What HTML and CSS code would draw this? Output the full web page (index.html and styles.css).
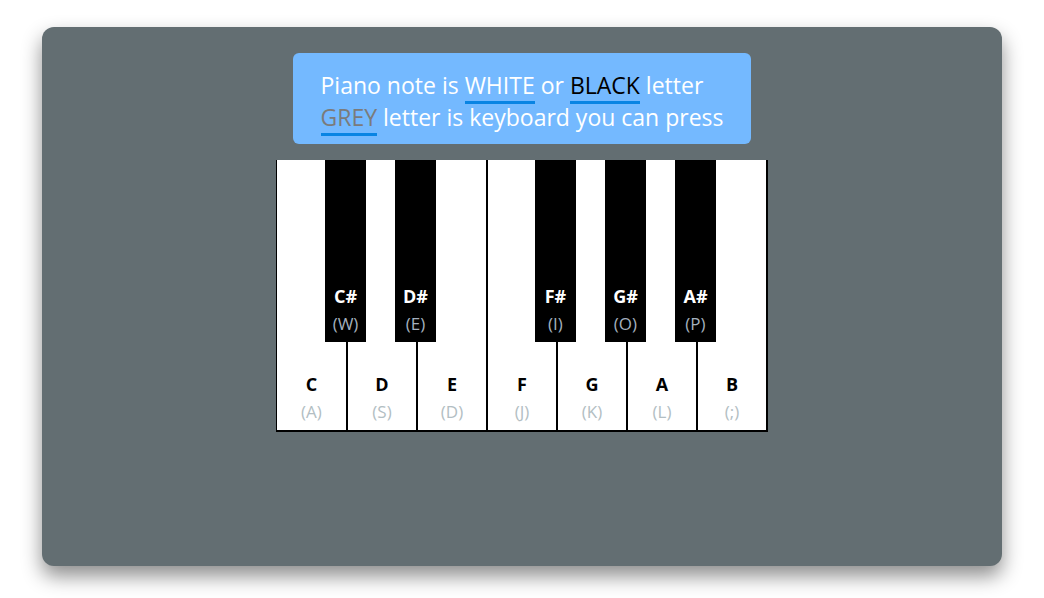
FILE: index.html
```html
<!DOCTYPE html>
<html>
<head>
<meta charset="utf-8">
<link rel="stylesheet" href="styles.css">
</head>
<body>
<div class="card">
  <div class="info">
    Piano note is <span class="u white">WHITE</span> or <span class="u black">BLACK</span> letter<br>
    <span class="u grey">GREY</span> letter is keyboard you can press
  </div>
  <div class="piano">
    <div class="key w"><span class="note">C</span><span class="kbd">(A)</span>
      <div class="key b"><span class="note">C#</span><span class="kbd">(W)</span></div></div>
    <div class="key w"><span class="note">D</span><span class="kbd">(S)</span>
      <div class="key b"><span class="note">D#</span><span class="kbd">(E)</span></div></div>
    <div class="key w"><span class="note">E</span><span class="kbd">(D)</span></div>
    <div class="key w"><span class="note">F</span><span class="kbd">(J)</span>
      <div class="key b"><span class="note">F#</span><span class="kbd">(I)</span></div></div>
    <div class="key w"><span class="note">G</span><span class="kbd">(K)</span>
      <div class="key b"><span class="note">G#</span><span class="kbd">(O)</span></div></div>
    <div class="key w"><span class="note">A</span><span class="kbd">(L)</span>
      <div class="key b"><span class="note">A#</span><span class="kbd">(P)</span></div></div>
    <div class="key w"><span class="note">B</span><span class="kbd">(;)</span></div>
  </div>
</div>
</body>
</html>
```
FILE: styles.css
```css
html, body {
  margin: 0;
  padding: 0;
  background: #ffffff;
  font-family: "Open Sans", "Noto Sans", sans-serif;
}
body {
  padding: 27px 0 32px;
  min-height: 598px;
  box-sizing: border-box;
}
.card {
  width: 960px;
  height: 539px;
  margin: 0 auto;
  box-sizing: border-box;
  background: #636e72;
  border-radius: 12px;
  box-shadow: 0 10px 20px rgba(0, 0, 0, 0.45);
  padding-top: 26px;
  display: flex;
  flex-direction: column;
  align-items: center;
  gap: 16px;
}
.info {
  background: #74b9ff;
  color: #ffffff;
  border-radius: 6px;
  padding: 16px 28px 11px;
  font-size: 23px;
  line-height: 32px;
}
.u {
  border-bottom: 3px solid #0984e3;
}
.white { color: #ffffff; }
.black { color: #000000; }
.grey { color: #7b7b7b; }
.piano {
  display: flex;
  border-left: 1px solid #000000;
  border-right: 1px solid #000000;
}
.key {
  display: flex;
  flex-direction: column;
  align-items: center;
  justify-content: flex-end;
  box-sizing: border-box;
}
.key.w {
  position: relative;
  width: 70px;
  height: 272px;
  background: #ffffff;
  border-left: 1px solid #000000;
  border-right: 1px solid #000000;
  border-bottom: 2px solid #000000;
  padding-bottom: 4px;
}
.key.w:first-child {
  border-left: none;
}
.key.b {
  position: absolute;
  top: 0;
  right: -20px;
  width: 41px;
  height: 182px;
  background: #000000;
  padding-bottom: 4px;
  z-index: 2;
}
.note {
  font-size: 18px;
  font-weight: 700;
  line-height: 28px;
  color: #000000;
}
.kbd {
  font-size: 17px;
  line-height: 28px;
  color: #b2bec3;
}
.key.b .note {
  color: #ffffff;
}
.key.b .kbd {
  color: #a4b0be;
}
```
